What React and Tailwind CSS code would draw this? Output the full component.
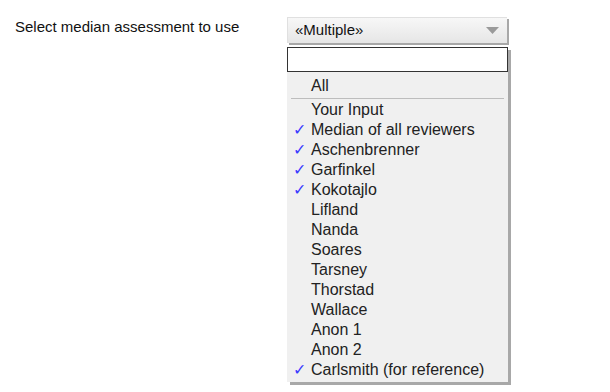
import React from "react";

const items = [
  ["Your Input", false],
  ["Median of all reviewers", true],
  ["Aschenbrenner", true],
  ["Garfinkel", true],
  ["Kokotajlo", true],
  ["Lifland", false],
  ["Nanda", false],
  ["Soares", false],
  ["Tarsney", false],
  ["Thorstad", false],
  ["Wallace", false],
  ["Anon 1", false],
  ["Anon 2", false],
  ["Carlsmith (for reference)", true],
];

export default function App() {
  return (
    <div className="w-[610px] h-[392px] bg-white flex" style={{ fontFamily: '"Liberation Sans", Arial, sans-serif' }}>
      <div className="pl-[15px] pt-[16px] w-[287px] text-[15px] text-[#111]">Select median assessment to use</div>
      <div className="pt-[17px] flex flex-col">
        <div className="w-[220px] h-[26px] flex items-center justify-between pl-[7px] pr-[8px] bg-gradient-to-b from-[#f7f7f7] to-[#e6e6e6] border-t border-l border-[#e0e0e0] shadow-[2px_2px_0_#a8a8a8] text-[15px] text-[#111]">
          <span>«Multiple»</span>
          <svg width="13" height="8" viewBox="0 0 13 8"><polygon points="0,0 13,0 6.5,7" fill="#9a9a9a" /></svg>
        </div>
        <div className="mt-[4px] w-[221px] bg-[#f0f0f0] shadow-[3px_3px_0_#a8a8a8] pb-[2px]">
          <div className="h-[25px] bg-white border border-[#333]"></div>
          <div className="text-[16px] text-[#222] leading-[20px]">
            <div className="pl-[24px] pt-[4px] h-[26px]">All</div>
            <div className="mx-[4px] h-px bg-[#bdbdbd] mb-[1px]"></div>
            {items.map(([name, checked]) => (
              <div key={name} className="flex h-[20px] items-center">
                <span className="w-[24px] pl-[6px] text-[#3b3bff] text-[16px]">{checked ? "✓" : ""}</span>
                <span>{name}</span>
              </div>
            ))}
          </div>
        </div>
      </div>
    </div>
  );
}
